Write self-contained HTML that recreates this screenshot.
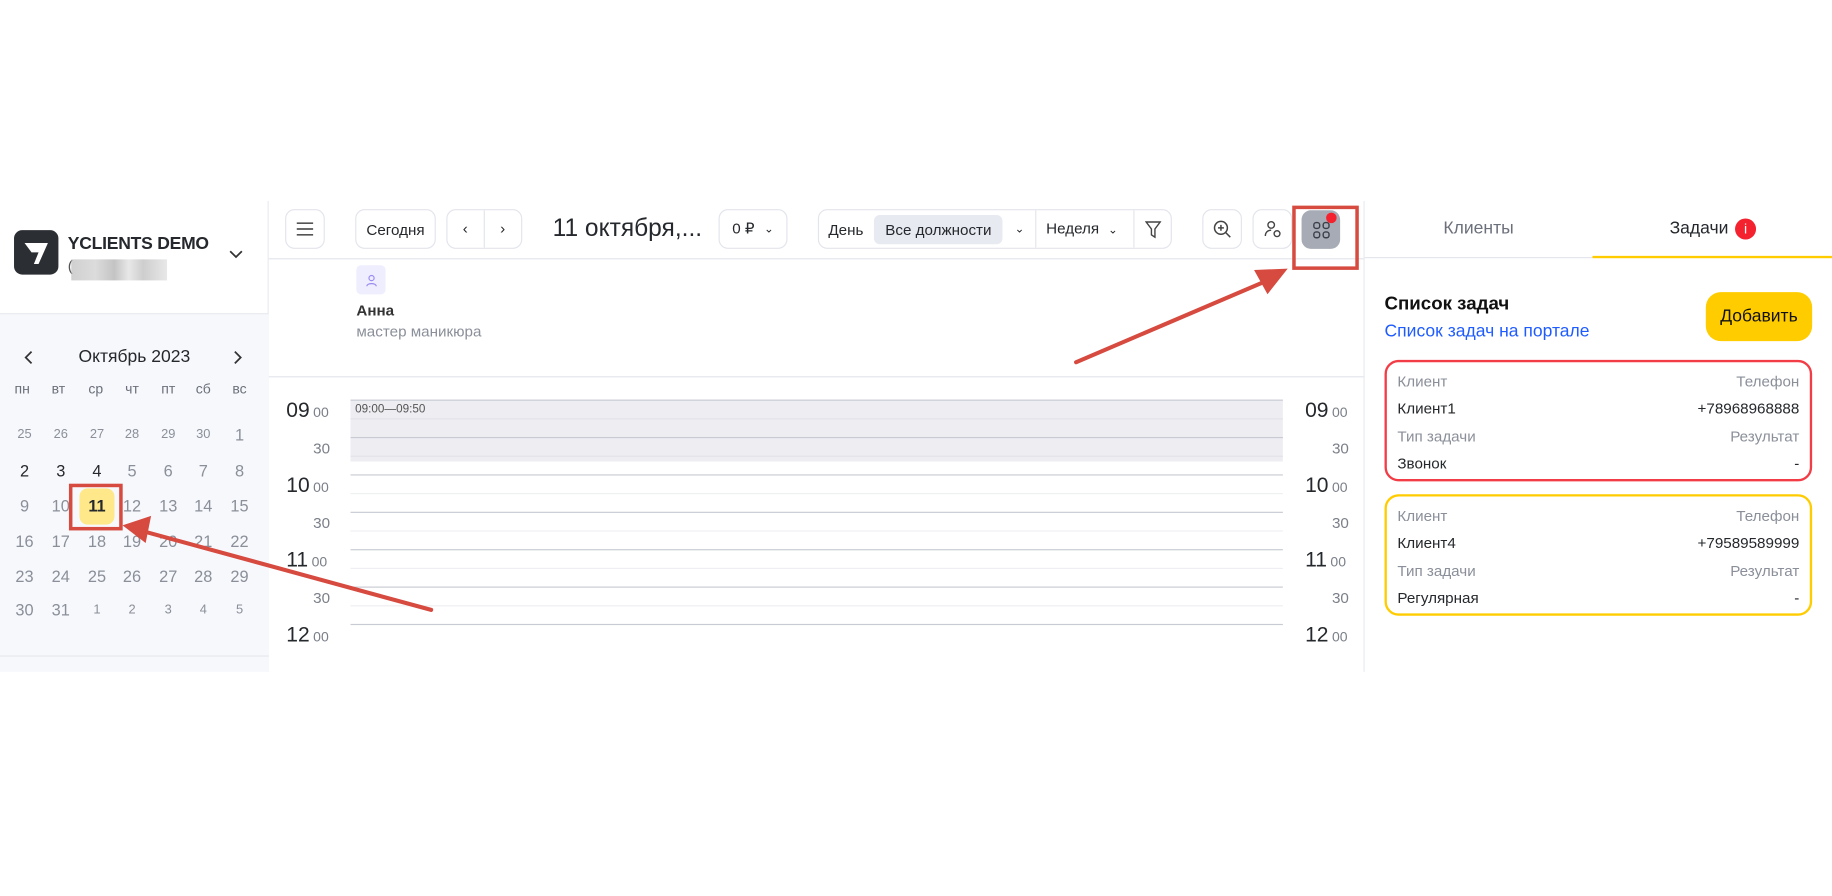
<!DOCTYPE html>
<html><head><meta charset="utf-8"><style>
*{box-sizing:border-box;margin:0;padding:0}
body{width:1832px;height:896px;background:#fff;overflow:hidden;font-family:"Liberation Sans","DejaVu Sans",sans-serif;color:#25282c}
#s{position:absolute;left:0;top:0;width:1568px;height:767px;transform:scale(1.16837);transform-origin:0 0}
.a{position:absolute}
.btn{position:absolute;border:1px solid #e3e5ec;border-radius:8px;background:#fff;font-size:13px;display:flex;align-items:center;justify-content:center;color:#25282c}
.wd{position:absolute;width:24px;text-align:center;font-size:12px;color:#6b707a}
.d{position:absolute;width:24px;text-align:center;font-size:14px;color:#8a8f99}
.sm{font-size:11px}
.hl{position:absolute;left:300px;width:798px;height:1px}
.tl{position:absolute;font-size:18px;color:#25282c}
.tl span{font-size:12px;color:#7a7f88;margin-left:3px}
.th{position:absolute;font-size:13px;color:#7a7f88}
.card{position:absolute;left:1185px;width:366px;height:104px;border:2px solid #f23c46;border-radius:12px;font-size:13px}
.card div{position:absolute}
.lb{color:#8a8f99}
</style></head><body><div id="s">
<div class="a" style="left:0;top:172px;width:230px;height:403px;border-right:1px solid #e8eaf0"></div>
<div class="a" style="left:0;top:268px;width:230px;height:307px;background:#f7f8fc;border-top:1px solid #e8eaf0"></div>
<div class="a" style="left:0;top:561px;width:230px;height:1px;background:#e6e8ee"></div>
<div class="a" style="left:12px;top:197px;width:38px;height:38px;background:#2b2f33;border-radius:7px">
<svg width="38" height="38" viewBox="0 0 38 38"><path d="M9 11 L29 11 L21 29 L17 29 L21 19 L15 19 Z" fill="#fff"/></svg></div>
<div class="a" style="left:58px;top:200px;font-size:15px;font-weight:bold;color:#25282c;letter-spacing:-.2px">YCLIENTS DEMO</div>
<div class="a" style="left:58px;top:220px;font-size:13px;color:#555">(</div>
<div class="a" style="left:61px;top:222px;width:82px;height:18px;background:linear-gradient(90deg,#bbb,#ccc 25%,#aaa 45%,#ddd 60%,#b8b8b8 75%,#ddd);opacity:.7"></div>
<svg class="a" style="left:195px;top:212px" width="14" height="12" viewBox="0 0 14 12"><path d="M2 3l5 5 5-5" fill="none" stroke="#333" stroke-width="1.5"/></svg>
<svg class="a" style="left:19px;top:299px" width="12" height="14"><path d="M8 2L3 7l5 5" fill="none" stroke="#333" stroke-width="1.5"/></svg>
<svg class="a" style="left:197px;top:299px" width="12" height="14"><path d="M4 2l5 5-5 5" fill="none" stroke="#333" stroke-width="1.5"/></svg>
<div class="a" style="left:0;width:230px;top:297px;text-align:center;font-size:15px;color:#25282c">Октябрь 2023</div>
<div class="wd" style="left:7px;top:326px">пн</div><div class="wd" style="left:38px;top:326px">вт</div><div class="wd" style="left:70px;top:326px">ср</div><div class="wd" style="left:101px;top:326px">чт</div><div class="wd" style="left:132px;top:326px">пт</div><div class="wd" style="left:162px;top:326px">сб</div><div class="wd" style="left:193px;top:326px">вс</div>
<div class="d sm" style="left:9px;top:366px">25</div><div class="d sm" style="left:40px;top:366px">26</div><div class="d sm" style="left:71px;top:366px">27</div><div class="d sm" style="left:101px;top:366px">28</div><div class="d sm" style="left:132px;top:366px">29</div><div class="d sm" style="left:162px;top:366px">30</div><div class="d" style="left:193px;top:364px">1</div>
<div class="d" style="left:9px;top:395px;color:#25282c">2</div><div class="d" style="left:40px;top:395px;color:#25282c">3</div><div class="d" style="left:71px;top:395px;color:#25282c">4</div><div class="d" style="left:101px;top:395px">5</div><div class="d" style="left:132px;top:395px">6</div><div class="d" style="left:162px;top:395px">7</div><div class="d" style="left:193px;top:395px">8</div>
<div class="a" style="left:68px;top:418px;width:30px;height:31px;background:#ffe88a;border-radius:7px"></div>
<div class="d" style="left:9px;top:425px">9</div><div class="d" style="left:40px;top:425px">10</div><div class="d" style="left:71px;top:425px;color:#25282c;font-weight:bold">11</div><div class="d" style="left:101px;top:425px">12</div><div class="d" style="left:132px;top:425px">13</div><div class="d" style="left:162px;top:425px">14</div><div class="d" style="left:193px;top:425px">15</div>
<div class="d" style="left:9px;top:455px">16</div><div class="d" style="left:40px;top:455px">17</div><div class="d" style="left:71px;top:455px">18</div><div class="d" style="left:101px;top:455px">19</div><div class="d" style="left:132px;top:455px">20</div><div class="d" style="left:162px;top:455px">21</div><div class="d" style="left:193px;top:455px">22</div>
<div class="d" style="left:9px;top:485px">23</div><div class="d" style="left:40px;top:485px">24</div><div class="d" style="left:71px;top:485px">25</div><div class="d" style="left:101px;top:485px">26</div><div class="d" style="left:132px;top:485px">27</div><div class="d" style="left:162px;top:485px">28</div><div class="d" style="left:193px;top:485px">29</div>
<div class="d" style="left:9px;top:514px">30</div><div class="d" style="left:40px;top:514px">31</div><div class="d sm" style="left:71px;top:516px">1</div><div class="d sm" style="left:101px;top:516px">2</div><div class="d sm" style="left:132px;top:516px">3</div><div class="d sm" style="left:162px;top:516px">4</div><div class="d sm" style="left:193px;top:516px">5</div>
<div class="a" style="left:59px;top:414px;width:46px;height:40px;border:3px solid #d64a3f"></div>
<div class="btn" style="left:244px;top:179px;width:34px;height:34px"><svg width="16" height="12"><path d="M1 1h14M1 6h14M1 11h14" stroke="#555" stroke-width="1.4"/></svg></div>
<div class="btn" style="left:304px;top:179px;width:69px;height:34px">Сегодня</div>
<div class="btn" style="left:382px;top:179px;width:65px;height:34px"><span style="width:32px;text-align:center;border-right:1px solid #e3e5ec;height:32px;line-height:32px">‹</span><span style="width:32px;text-align:center;line-height:32px">›</span></div>
<div class="a" style="left:473px;top:184px;font-size:21px;color:#25282c">11 октября,...</div>
<div class="btn" style="left:615px;top:179px;width:59px;height:34px">0 ₽ <span style="font-size:10px;margin-left:8px">⌄</span></div>
<div class="btn" style="left:700px;top:179px;width:303px;height:34px;justify-content:flex-start">
<span style="margin-left:8px;width:39px">День</span>
<span style="background:#e8eaf1;border-radius:5px;padding:5px 0;width:111px;text-align:center">Все должности</span>
<span style="margin-left:10px;font-size:10px;width:18px">⌄</span>
<span style="border-left:1px solid #e3e5ec;height:32px;padding-left:8px;line-height:32px;width:84px">Неделя <span style="font-size:10px;margin-left:4px">⌄</span></span>
<span style="border-left:1px solid #e3e5ec;height:32px;width:32px;display:flex;align-items:center;justify-content:center"><svg width="14" height="15"><path d="M1 1h12L8.5 7v7L5.5 12V7z" fill="none" stroke="#444" stroke-width="1.2"/></svg></span>
</div>
<div class="btn" style="left:1029px;top:179px;width:34px;height:34px"><svg width="16" height="16"><circle cx="7" cy="7" r="5.5" fill="none" stroke="#444" stroke-width="1.3"/><path d="M11 11l4 4M7 4.5v5M4.5 7h5" stroke="#444" stroke-width="1.3"/></svg></div>
<div class="btn" style="left:1072px;top:179px;width:34px;height:34px"><svg width="16" height="16"><circle cx="7" cy="4.5" r="2.8" fill="none" stroke="#444" stroke-width="1.2"/><path d="M2 14c0-3 2-5 5-5" fill="none" stroke="#444" stroke-width="1.2"/><circle cx="12" cy="12" r="2.5" fill="none" stroke="#444" stroke-width="1.2"/></svg></div>
<div class="a" style="left:1114px;top:180px;width:33px;height:33px;background:#a6abb5;border-radius:8px;display:flex;align-items:center;justify-content:center"><svg width="16" height="16"><g fill="none" stroke="#3a3f48" stroke-width="1.2"><rect x="1.5" y="1.5" width="5" height="5" rx="2"/><rect x="9.5" y="1.5" width="5" height="5" rx="2"/><rect x="1.5" y="9.5" width="5" height="5" rx="2"/><rect x="9.5" y="9.5" width="5" height="5" rx="2"/></g></svg></div>
<div class="a" style="left:1135px;top:182px;width:9px;height:9px;border-radius:50%;background:#f4222f"></div>
<div class="a" style="left:230px;top:221px;width:938px;height:1px;background:#e3e5ec"></div>
<div class="a" style="left:305px;top:227px;width:25px;height:25px;background:#eeeeff;border-radius:4px;display:flex;align-items:center;justify-content:center"><svg width="12" height="12"><circle cx="6" cy="4" r="2.2" fill="none" stroke="#9a8cf2" stroke-width="1"/><path d="M2 11c0-3 8-3 8 0" fill="none" stroke="#9a8cf2" stroke-width="1"/></svg></div>
<div class="a" style="left:305px;top:258px;font-size:13px;font-weight:bold;color:#333">Анна</div>
<div class="a" style="left:305px;top:276px;font-size:13px;color:#8a8f99">мастер маникюра</div>
<div class="a" style="left:230px;top:322px;width:938px;height:1px;background:#e3e5ec"></div>
<div class="a" style="left:300px;top:342px;width:798px;height:53px;background:#ededf2"></div>
<div class="a" style="left:304px;top:345px;font-size:10px;color:#555">09:00—09:50</div>
<div class="hl" style="top:342px;background:#c8cbd2"></div>
<div class="hl" style="top:358px;background:#e2e3e8"></div>
<div class="hl" style="top:374px;background:#c8cbd2"></div>
<div class="hl" style="top:390px;background:#e2e3e8"></div>
<div class="hl" style="top:406px;background:#c8cbd2"></div>
<div class="hl" style="top:422px;background:#eeeff2"></div>
<div class="hl" style="top:438px;background:#c8cbd2"></div>
<div class="hl" style="top:454px;background:#eeeff2"></div>
<div class="hl" style="top:470px;background:#c8cbd2"></div>
<div class="hl" style="top:486px;background:#eeeff2"></div>
<div class="hl" style="top:502px;background:#c8cbd2"></div>
<div class="hl" style="top:518px;background:#eeeff2"></div>
<div class="hl" style="top:534px;background:#c8cbd2"></div>
<div class="tl" style="left:245px;top:341px">09<span>00</span></div><div class="th" style="left:268px;top:376px">30</div>
<div class="tl" style="left:245px;top:405px">10<span>00</span></div><div class="th" style="left:268px;top:440px">30</div>
<div class="tl" style="left:245px;top:469px">11<span>00</span></div><div class="th" style="left:268px;top:504px">30</div>
<div class="tl" style="left:245px;top:533px">12<span>00</span></div>
<div class="tl" style="left:1117px;top:341px">09<span>00</span></div><div class="th" style="left:1140px;top:376px">30</div>
<div class="tl" style="left:1117px;top:405px">10<span>00</span></div><div class="th" style="left:1140px;top:440px">30</div>
<div class="tl" style="left:1117px;top:469px">11<span>00</span></div><div class="th" style="left:1140px;top:504px">30</div>
<div class="tl" style="left:1117px;top:533px">12<span>00</span></div>
<div class="a" style="left:1167px;top:172px;width:1px;height:403px;background:#e8eaf0"></div>
<div class="a" style="left:1168px;top:220px;width:195px;height:1px;background:#e3e5ec"></div>
<div class="a" style="left:1363px;top:219px;width:205px;height:2px;background:#ffcc00"></div>
<div class="a" style="left:1168px;width:195px;top:187px;text-align:center;font-size:15px;color:#6b707a">Клиенты</div>
<div class="a" style="left:1429px;top:187px;font-size:15px;color:#25282c">Задачи</div>
<div class="a" style="left:1485px;top:187px;width:18px;height:18px;border-radius:50%;background:#f4222f;color:#fff;font-size:12px;text-align:center;line-height:18px">i</div>
<div class="a" style="left:1185px;top:252px;font-size:16px;font-weight:bold;color:#111">Список задач</div>
<div class="a" style="left:1185px;top:275px;font-size:15px;color:#1f5cff">Список задач на портале</div>
<div class="a" style="left:1460px;top:250px;width:91px;height:42px;background:#ffcc00;border-radius:13px;font-size:15px;color:#111;text-align:center;line-height:42px">Добавить</div>
<div class="card" style="top:308px"><div class="lb" style="left:9px;top:9px">Клиент</div><div class="lb" style="right:9px;top:9px">Телефон</div><div style="left:9px;top:32px">Клиент1</div><div style="right:9px;top:32px">+78968968888</div><div class="lb" style="left:9px;top:56px">Тип задачи</div><div class="lb" style="right:9px;top:56px">Результат</div><div style="left:9px;top:79px">Звонок</div><div style="right:9px;top:79px">-</div></div>
<div class="card" style="top:423px;border-color:#ffcc00"><div class="lb" style="left:9px;top:9px">Клиент</div><div class="lb" style="right:9px;top:9px">Телефон</div><div style="left:9px;top:32px">Клиент4</div><div style="right:9px;top:32px">+79589589999</div><div class="lb" style="left:9px;top:56px">Тип задачи</div><div class="lb" style="right:9px;top:56px">Результат</div><div style="left:9px;top:79px">Регулярная</div><div style="right:9px;top:79px">-</div></div>
<div class="a" style="left:1106px;top:176px;width:57px;height:55px;border:3px solid #d64a3f"></div>
<svg class="a" style="left:0;top:0" width="1568" height="767">
<g stroke="#d64a3f" stroke-width="3.5" stroke-linecap="round" fill="#d64a3f">
<line x1="921" y1="310" x2="1085" y2="240"/>
<path d="M1100 231 L1075 232 L1085 250 Z" stroke-width="2"/>
<line x1="369" y1="522" x2="120" y2="454"/>
<path d="M107 450 L128 443 L124 463 Z" stroke-width="2"/>
</g></svg>
</div></body></html>
